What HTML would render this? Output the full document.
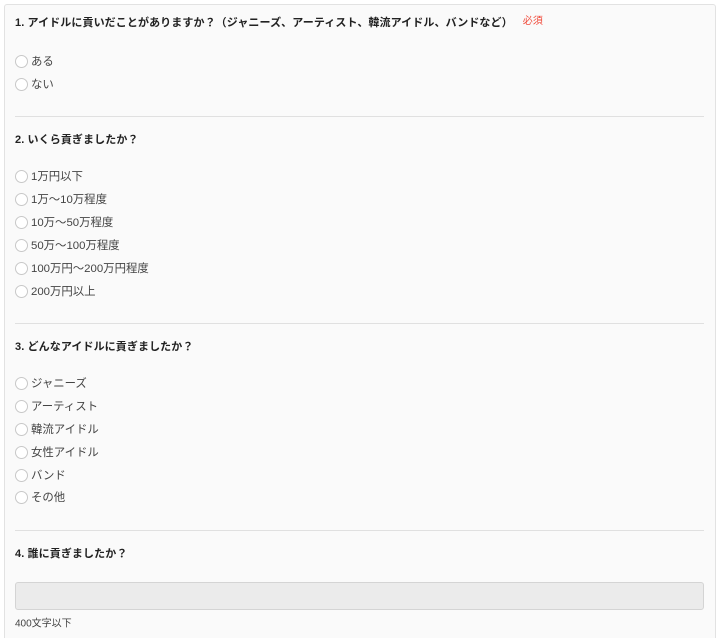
<!DOCTYPE html>
<html><head><meta charset="utf-8"><style>
*{margin:0;padding:0;box-sizing:border-box}
html,body{width:720px;height:638px;overflow:hidden}
body{background:#fff;font-family:"Liberation Sans","Noto Sans CJK JP",sans-serif;color:#333;position:relative}
.panel{position:absolute;left:4px;top:4px;width:712px;height:640px;background:#fafafa;border:1px solid #e2e2e2;border-radius:3px}
.a{position:absolute;left:15px;white-space:nowrap}
h3{font-size:11px;font-weight:bold;color:#222;transform:translateY(-50%);letter-spacing:0.1px}
.req{color:#f04a3a;font-weight:normal;font-size:10px;margin-left:10px;position:relative;top:-2px}
.o{font-size:11.4px;color:#444;transform:translateY(-50%);display:flex;align-items:center}
.o i{display:inline-block;width:13px;height:13px;border:1px solid #c8c8c8;border-radius:50%;background:#fff;margin-right:3px}
.hr{position:absolute;left:15px;width:689px;height:1px;background:#e0e0e0}
.inp{position:absolute;left:15px;top:582px;width:689px;height:28px;background:#ebebeb;border:1px solid #d4d4d4;border-radius:3px}
.s{font-size:10px;color:#444;transform:translateY(-50%)}
</style></head><body>
<div class="panel"></div>
<h3 class="a" style="top:22px">1. アイドルに貢いだことがありますか？（ジャニーズ、アーティスト、韓流アイドル、バンドなど）<span class="req">必須</span></h3>
<div class="a o" style="top:61px"><i></i>ある</div>
<div class="a o" style="top:84px"><i></i>ない</div>
<div class="hr" style="top:116px"></div>
<h3 class="a" style="top:139px">2. いくら貢ぎましたか？</h3>
<div class="a o" style="top:176px"><i></i>1万円以下</div>
<div class="a o" style="top:199px"><i></i>1万～10万程度</div>
<div class="a o" style="top:222px"><i></i>10万～50万程度</div>
<div class="a o" style="top:245px"><i></i>50万～100万程度</div>
<div class="a o" style="top:268px"><i></i>100万円～200万円程度</div>
<div class="a o" style="top:291px"><i></i>200万円以上</div>
<div class="hr" style="top:323px"></div>
<h3 class="a" style="top:346px">3. どんなアイドルに貢ぎましたか？</h3>
<div class="a o" style="top:383px"><i></i>ジャニーズ</div>
<div class="a o" style="top:406px"><i></i>アーティスト</div>
<div class="a o" style="top:429px"><i></i>韓流アイドル</div>
<div class="a o" style="top:452px"><i></i>女性アイドル</div>
<div class="a o" style="top:475px"><i></i>バンド</div>
<div class="a o" style="top:497px"><i></i>その他</div>
<div class="hr" style="top:530px"></div>
<h3 class="a" style="top:553px">4. 誰に貢ぎましたか？</h3>
<div class="inp"></div>
<div class="a s" style="top:622px">400文字以下</div>
</body></html>
